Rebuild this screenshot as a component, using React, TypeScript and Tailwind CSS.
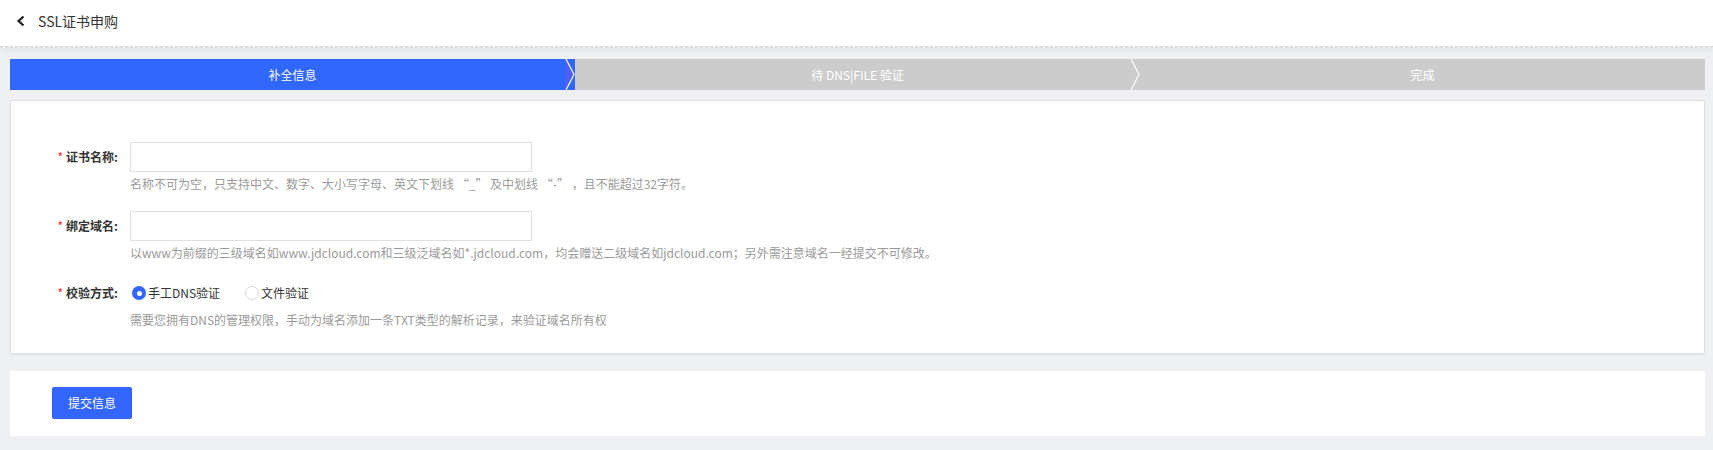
import React from 'react';

const steps = [
  { label: '补全信息', active: true },
  { label: '待 DNS|FILE 验证', active: false },
  { label: '完成', active: false },
];

const Chevron: React.FC<{ fill: string }> = ({ fill }) => (
  <svg className="absolute right-0 top-0" width="10" height="31" viewBox="0 0 10 31">
    <polygon points="0,0 1,0 9,15.5 1,31 0,31" fill={fill} />
    <polyline points="1,0 9,15.5 1,31" fill="none" stroke="#ffffff" strokeWidth="1.2" />
  </svg>
);

const Label: React.FC<{ text: string }> = ({ text }) => (
  <div className="w-[119px] shrink-0 pr-[12px] flex items-center justify-end">
    <span className="text-[#f5222d] text-[12px] mr-[3px] leading-none">*</span>
    <span className="text-[12px] font-bold text-[#333]">{text}</span>
  </div>
);

const Hint: React.FC<{ children: React.ReactNode }> = ({ children }) => (
  <div className="ml-[119px] mt-[3px] text-[12px] leading-[18px] text-[#9a9a9a]">{children}</div>
);

export default function App() {
  return (
    <div className="min-h-[450px] bg-[#eef0f4] font-['Noto_Sans_CJK_SC',sans-serif] text-[#333]">
      {/* Header */}
      <header className="h-[47px] bg-white border-b border-dashed border-[#cfd3d8] shadow-[0_3px_6px_rgba(0,0,0,0.06)] flex items-center pb-[4px]">
        <svg className="ml-[16px]" width="10" height="12" viewBox="0 0 10 12">
          <polyline points="7.5,1.5 2.5,6 7.5,10.5" fill="none" stroke="#1f1f1f" strokeWidth="2.2" />
        </svg>
        <span className="ml-[12px] text-[14px] text-[#333]">SSL证书申购</span>
      </header>

      <div className="pl-[10px] pr-[8px]">
        {/* Steps */}
        <div className="mt-[12px] h-[31px] flex">
          {steps.map((s, i) => (
            <div
              key={s.label}
              className={`relative flex-1 flex items-center justify-center text-[12px] text-white ${
                s.active ? 'bg-[#3067ff]' : 'bg-[#cccccc]'
              }`}
            >
              {s.label}
              {i < steps.length - 1 && <Chevron fill={s.active ? '#4d5fff' : '#cccccc'} />}
              {i < steps.length - 1 && s.active && <div className="hidden" />}
            </div>
          ))}
        </div>

        {/* Form card */}
        <div className="mt-[10px] bg-white border border-[#dde1e6] rounded-[2px] shadow-[0_1px_2px_rgba(0,0,0,0.05)] pt-[41px] pb-[24px]">
          <div className="flex h-[30px]">
            <Label text="证书名称:" />
            <input className="w-[402px] h-[30px] border border-[#e0e0e0] outline-none px-2 text-[12px]" />
          </div>
          <Hint>名称不可为空，只支持中文、数字、大小写字母、英文下划线 “_” 及中划线 “-” ，且不能超过32字符。</Hint>

          <div className="flex h-[30px] mt-[18px]">
            <Label text="绑定域名:" />
            <input className="w-[402px] h-[30px] border border-[#e0e0e0] outline-none px-2 text-[12px]" />
          </div>
          <Hint>以www为前缀的三级域名如www.jdcloud.com和三级泛域名如*.jdcloud.com，均会赠送二级域名如jdcloud.com；另外需注意域名一经提交不可修改。</Hint>

          <div className="flex h-[30px] mt-[16px]">
            <Label text="校验方式:" />
            <div className="flex items-center text-[12px] text-[#333]">
              <span className="ml-[2px] w-[14px] h-[14px] rounded-full bg-[#3366ff] flex items-center justify-center">
                <span className="w-[5px] h-[5px] rounded-full bg-white" />
              </span>
              <span className="ml-[2px]">手工DNS验证</span>
              <span className="ml-[25px] w-[14px] h-[14px] rounded-full border border-[#d6d6de] bg-white" />
              <span className="ml-[2px]">文件验证</span>
            </div>
          </div>
          <Hint>需要您拥有DNS的管理权限，手动为域名添加一条TXT类型的解析记录，来验证域名所有权</Hint>
        </div>

        {/* Submit */}
        <div className="mt-[17px] bg-white h-[65px] pl-[42px] pt-[16px]">
          <button className="w-[80px] h-[32px] bg-[#3366ff] rounded-[2px] text-white text-[12px]">提交信息</button>
        </div>
      </div>
    </div>
  );
}
